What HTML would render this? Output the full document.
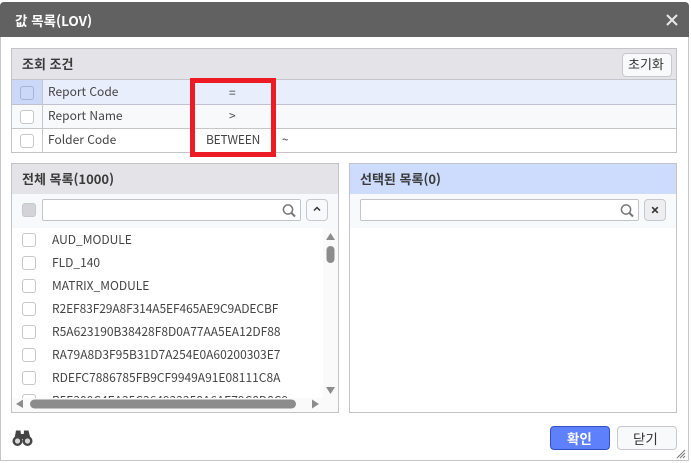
<!DOCTYPE html>
<html lang="ko"><head><meta charset="utf-8">
<style>
html,body{margin:0;padding:0;background:#fff;}
body{width:691px;height:463px;position:relative;overflow:hidden;font-family:"Noto Sans CJK KR","Liberation Sans",sans-serif;font-size:12px;color:#444;}
.a{position:absolute;box-sizing:border-box;}
.t{position:absolute;white-space:nowrap;line-height:16px;}
.cb{position:absolute;box-sizing:border-box;width:14px;height:14px;border:1px solid #c6c6cb;border-radius:3px;background:#fff;}
.btn{position:absolute;box-sizing:border-box;border:1px solid #c8c8cc;border-radius:4px;background:#f8f9fb;}
.hd{font-size:13px;font-weight:700;color:#3a3a3a;}
</style></head><body>
<div class="a" style="left:0;top:2px;width:689px;height:459px;background:#fff;border:1px solid #c6c6c6;border-top:0;border-radius:4px 4px 0 0;"></div>
<div class="a" style="left:0;top:2px;width:689px;height:35px;background:#616161;border-radius:4px 4px 0 0;"></div>
<div class="t" style="left:15px;top:12px;color:#fff;font-size:13.5px;font-weight:700;">값 목록(LOV)</div>
<svg class="a" style="left:665px;top:13px" width="14" height="14"><path d="M2 2L12 12M12 2L2 12" stroke="#e8e8e8" stroke-width="2"/></svg>

<!-- search panel -->
<div class="a" style="left:11px;top:48px;width:666px;height:105px;border:1px solid #c4c4c8;background:#fff;"></div>
<div class="a" style="left:12px;top:49px;width:664px;height:30px;background:#e4e4e8;"></div>
<div class="a" style="left:12px;top:79px;width:664px;height:1px;background:#c4c4cc;"></div>
<div class="a" style="left:12px;top:80px;width:664px;height:24px;background:#e9eefc;"></div>
<div class="a" style="left:12px;top:80px;width:30px;height:24px;background:#cbd8f8;"></div>
<div class="a" style="left:12px;top:104px;width:664px;height:1px;background:#bfc0d0;"></div>
<div class="a" style="left:12px;top:105px;width:664px;height:23px;background:#f8f9fb;"></div>
<div class="a" style="left:12px;top:128px;width:664px;height:1px;background:#c6c6c8;"></div>
<div class="a" style="left:42px;top:80px;width:1px;height:72px;background:#c6c6cc;"></div>
<div class="t hd" style="left:22px;top:56px;">조회 조건</div>
<div class="btn" style="left:622px;top:53px;width:50px;height:24px;background:#f8f9fb;"></div>
<div class="t" style="left:628px;top:56px;color:#333;font-size:13px;">초기화</div>
<div class="cb" style="left:20px;top:86px;background:#cbd8f8;border-color:#a9b4d0;"></div>
<div class="cb" style="left:20px;top:110px;"></div>
<div class="cb" style="left:20px;top:134px;"></div>
<div class="t" style="left:48px;top:84px;">Report Code</div>
<div class="t" style="left:48px;top:108px;">Report Name</div>
<div class="t" style="left:48px;top:132px;">Folder Code</div>
<div class="t" style="left:229px;top:85px;color:#333;">=</div>
<div class="t" style="left:229px;top:108px;">&gt;</div>
<div class="t" style="left:206px;top:132px;letter-spacing:-.2px;">BETWEEN</div>
<div class="t" style="left:282px;top:132px;">~</div>
<div class="a" style="left:190px;top:78px;width:86px;height:79px;border:5px solid #ed1c24;"></div>

<!-- left panel -->
<div class="a" style="left:11px;top:163px;width:328px;height:250px;border:1px solid #c4c4c8;background:#fff;"></div>
<div class="a" style="left:12px;top:164px;width:326px;height:30px;background:#e4e4e8;"></div>
<div class="a" style="left:12px;top:194px;width:326px;height:34px;background:#f8f9fb;"></div>
<div class="t hd" style="left:22px;top:171px;">전체 목록(1000)</div>
<div class="cb" style="left:22px;top:203px;background:#d4d4d8;"></div>
<div class="a" style="left:42px;top:199px;width:259px;height:22px;border:1px solid #c4c4c8;border-radius:2px;background:#fff;"></div>
<svg class="a" style="left:281px;top:203px" width="16" height="15" fill="none" stroke="#777" stroke-width="1.5"><circle cx="7" cy="6.5" r="4.6"/><path d="M10.5 10L14 13.5" stroke-width="2"/></svg>
<div class="btn" style="left:306px;top:199px;width:22px;height:22px;"></div>
<svg class="a" style="left:313px;top:206px" width="8" height="6" fill="none" stroke="#333" stroke-width="1.5"><path d="M1 4.5L4 1.5L7 4.5"/></svg>
<div class="a" style="left:12px;top:228px;width:311px;height:170px;overflow:hidden;">
<div class="cb" style="left:10px;top:5px;"></div><div class="t" style="left:40px;top:4px;">AUD_MODULE</div>
<div class="cb" style="left:10px;top:28px;"></div><div class="t" style="left:40px;top:27px;">FLD_140</div>
<div class="cb" style="left:10px;top:51px;"></div><div class="t" style="left:40px;top:50px;">MATRIX_MODULE</div>
<div class="cb" style="left:10px;top:74px;"></div><div class="t" style="left:40px;top:73px;letter-spacing:-.1px;">R2EF83F29A8F314A5EF465AE9C9ADECBF</div>
<div class="cb" style="left:10px;top:97px;"></div><div class="t" style="left:40px;top:96px;">R5A623190B38428F8D0A77AA5EA12DF88</div>
<div class="cb" style="left:10px;top:120px;"></div><div class="t" style="left:40px;top:119px;">RA79A8D3F95B31D7A254E0A60200303E7</div>
<div class="cb" style="left:10px;top:143px;"></div><div class="t" style="left:40px;top:142px;">RDEFC7886785FB9CF9949A91E08111C8A</div>
<div class="cb" style="left:10px;top:166px;"></div><div class="t" style="left:40px;top:165px;">R5E300C4EA35C364922258A6AE79C8D8C9</div>
</div>
<div class="a" style="left:12px;top:398px;width:326px;height:14px;background:#fafafb;"></div>
<div class="a" style="left:323px;top:228px;width:15px;height:184px;background:#fafafb;"></div>
<svg class="a" style="left:323px;top:228px" width="15" height="170"><path d="M3 12L7.5 5L12 12Z" fill="#8c8c8c"/><rect x="3.5" y="18" width="8" height="17" rx="4" fill="#8c8c8c"/><path d="M3 159L12 159L7.5 166Z" fill="#8c8c8c"/></svg>
<svg class="a" style="left:12px;top:396px" width="326" height="16"><path d="M11 3.5L11 12L4 8Z" fill="#8c8c8c"/><rect x="18" y="3.5" width="266" height="9" rx="4.5" fill="#8c8c8c"/><path d="M300 3.5L307 8L300 12.5Z" fill="#8c8c8c"/></svg>

<!-- right panel -->
<div class="a" style="left:349px;top:163px;width:328px;height:250px;border:1px solid #c4c4c8;background:#fff;"></div>
<div class="a" style="left:350px;top:164px;width:326px;height:30px;background:#cddcfc;"></div>
<div class="a" style="left:350px;top:194px;width:326px;height:34px;background:#f8f9fb;"></div>
<div class="t hd" style="left:360px;top:171px;">선택된 목록(0)</div>
<div class="a" style="left:360px;top:199px;width:279px;height:22px;border:1px solid #c4c4c8;border-radius:2px;background:#fff;"></div>
<svg class="a" style="left:619px;top:203px" width="16" height="15" fill="none" stroke="#777" stroke-width="1.5"><circle cx="7" cy="6.5" r="4.6"/><path d="M10.5 10L14 13.5" stroke-width="2"/></svg>
<div class="btn" style="left:644px;top:199px;width:22px;height:22px;background:#eeeef0;"></div>
<svg class="a" style="left:651px;top:206px" width="8" height="8" stroke="#333" stroke-width="1.6"><path d="M1.2 1.2L6.8 6.8M6.8 1.2L1.2 6.8"/></svg>

<!-- footer -->
<svg class="a" style="left:12px;top:429px" width="21" height="18" fill="#444"><path d="M4 1.5h4.5l.8 8H2.5zM12 1.5h4.5l2 8h-7z"/><rect x="8.5" y="5" width="4" height="5"/><circle cx="5.5" cy="12" r="5"/><circle cx="15.5" cy="12" r="5"/><circle cx="5.5" cy="12" r="2.6" fill="#d8d8d8"/><circle cx="15.5" cy="12" r="2.6" fill="#d8d8d8"/></svg>
<div class="a" style="left:550px;top:426px;width:60px;height:24px;border:1px solid #2f50c8;border-radius:4px;background:#5f80fb;"></div>
<div class="t" style="left:567px;top:430px;color:#fff;font-size:13.5px;font-weight:700;">확인</div>
<div class="btn" style="left:617px;top:426px;width:60px;height:24px;"></div>
<div class="t" style="left:633px;top:430px;color:#333;font-size:13.5px;">닫기</div>
<svg class="a" style="left:676px;top:449px" width="10" height="10" stroke="#777" stroke-width="1"><path d="M1 9L9 1M4 9L9 4M7 9L9 7"/></svg>
</body></html>
